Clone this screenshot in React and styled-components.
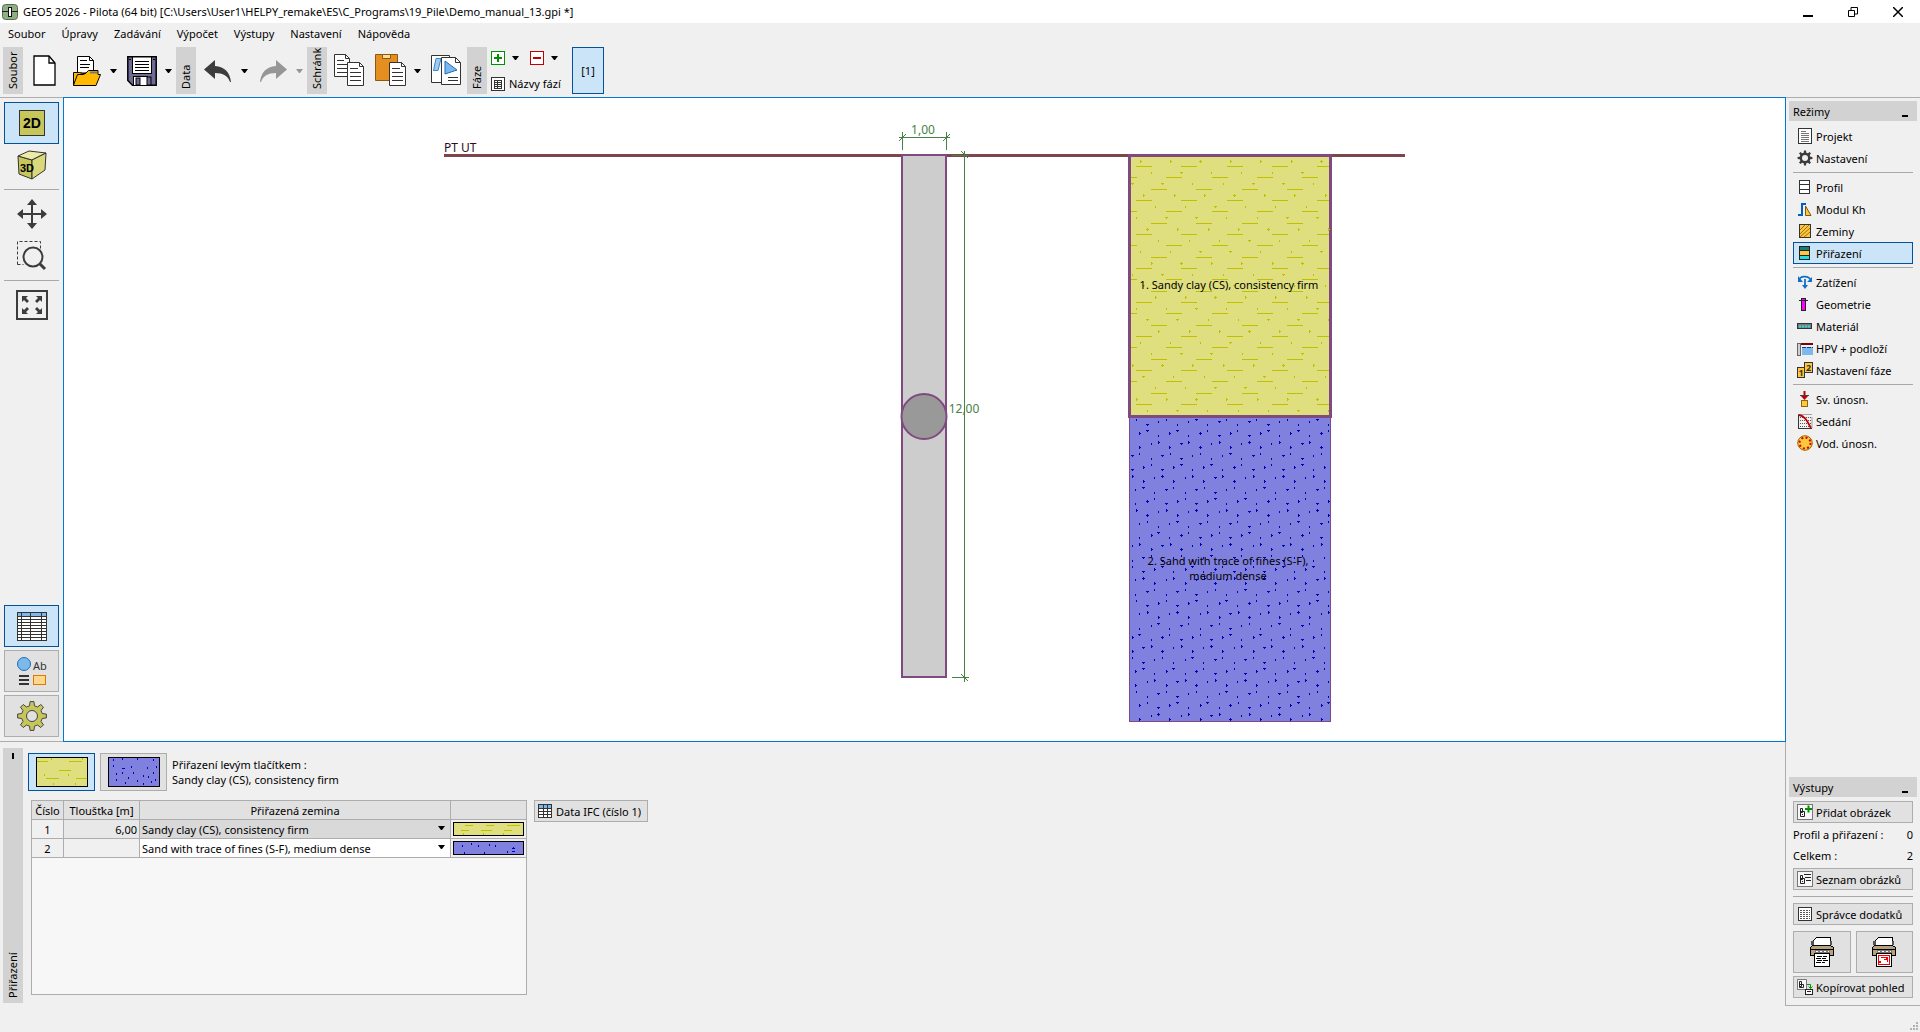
import React from "react";
import styled, { createGlobalStyle, css } from "styled-components";

const ACCENT = "#00539c";
const FRAME = "#0078d4";
const GREY = "#adadad";

const GlobalStyle = createGlobalStyle`
  *, *::before, *::after { box-sizing: border-box; }
  body { margin: 0; background: #f0f0f0; }
  body, button, input, select, table {
    font-family: "Noto Sans", "Open Sans", sans-serif;
    font-size: 11px;
    line-height: 15px;
    color: #000;
  }
  svg { display: block; flex: none; }
`;

/* ---------- page frame ---------- */

const Page = styled.div`
  min-height: 100vh;
  display: flex;
  flex-direction: column;
  background: #f0f0f0;
`;

const TitleBar = styled.header`
  display: flex;
  align-items: center;
  gap: 5px;
  height: 23px;
  padding-left: 2px;
  background: #fff;
`;

const TitleText = styled.h1`
  margin: 0;
  flex: 1;
  font-size: 11px;
  font-weight: 400;
  white-space: nowrap;
`;

const WindowButtons = styled.div`
  display: flex;
`;

const WindowButton = styled.button`
  display: flex;
  align-items: center;
  justify-content: center;
  width: 45px;
  height: 23px;
  padding: 0;
  border: 0;
  background: none;
`;

const MenuBar = styled.nav`
  display: flex;
  height: 20px;
  align-items: center;
`;

const MenuItem = styled.button`
  padding: 0 8px;
  border: 0;
  background: none;
`;

const ToolBar = styled.div`
  display: flex;
  gap: 1px;
  height: 54px;
  padding: 4px 3px 3px;
`;

const ToolGroup = styled.div`
  display: flex;
  align-items: center;
  gap: 2px;
  height: 47px;
`;

const Grip = styled.div`
  display: flex;
  align-items: center;
  justify-content: space-between;
  width: 20px;
  height: 100%;
  padding: 5px 0;
  background: #d2d2d2;
  line-height: 20px;
  writing-mode: vertical-rl;
  transform: rotate(180deg);
  white-space: nowrap;
`;

const Split = styled.div`
  display: flex;
  align-items: center;
  gap: ${(p) => p.$gap || 0}px;
`;

const ToolButton = styled.button`
  display: flex;
  align-items: center;
  justify-content: center;
  width: 40px;
  height: 40px;
  padding: 0;
  border: 0;
  background: none;
`;

const ArrowButton = styled.button`
  display: flex;
  align-items: center;
  justify-content: center;
  width: 13px;
  height: 14px;
  padding: 0;
  border: 0;
  background: none;
`;

const StageTools = styled.div`
  display: flex;
  flex-direction: column;
  justify-content: space-between;
  height: 100%;
  padding: 4px 9px 3px 2px;
`;

const StageRow = styled.div`
  display: flex;
  align-items: center;
  gap: 8px;
`;

const SmallButton = styled.button`
  display: flex;
  align-items: center;
  gap: 4px;
  padding: 0;
  border: 0;
  background: none;
  white-space: nowrap;
`;

const StageTab = styled.button`
  width: 32px;
  height: 47px;
  padding: 0;
  border: 1px solid ${ACCENT};
  background: #cce4f7;
`;

const Body = styled.div`
  flex: 1;
  display: flex;
`;

const Workspace = styled.main`
  flex: 1;
  min-width: 0;
  display: flex;
  flex-direction: column;
`;

const Upper = styled.div`
  position: relative;
  flex: 1;
  display: flex;
  min-height: 0;
  margin-right: -1px;
`;

const Rail = styled.div`
  display: flex;
  flex-direction: column;
  align-items: center;
  width: 63px;
  padding: 4px;
  border-top: 1px solid ${GREY};
  border-bottom: 1px solid ${GREY};
`;

const RailGroup = styled.div`
  display: flex;
  flex-direction: column;
  gap: ${(p) => p.$gap || 0}px;
  width: 100%;
`;

const RailButton = styled.button`
  display: flex;
  align-items: center;
  justify-content: center;
  width: 100%;
  height: 42px;
  padding: 0;
  border: 1px solid transparent;
  background: none;
  ${(p) => p.$raised && css`border-color: ${GREY}; background: #e1e1e1;`}
  ${(p) => p.$active && css`border-color: ${ACCENT}; background: #cce4f7;`}
`;

const Rule = styled.hr`
  width: 100%;
  height: 1px;
  margin: ${(p) => p.$space || 3}px 0;
  border: 0;
  background: #a8a8a8;
`;

const Spacer = styled.div`
  flex: 1;
`;

const Canvas = styled.div`
  flex: 1;
  min-width: 0;
  border: 1px solid ${FRAME};
  background: #fff;
  svg { width: 100%; height: 100%; }
`;

/* ---------- right column ---------- */

const SidePanel = styled.aside`
  display: flex;
  flex-direction: column;
  width: 135px;
  padding: 3px;
  border: solid ${GREY};
  border-width: 1px 0 1px 1px;
`;

const PanelTitle = styled.div`
  display: flex;
  justify-content: space-between;
  align-items: center;
  height: 20px;
  padding: 0 8px 0 4px;
  background: #d2d2d2;
`;

const PanelBody = styled.div`
  display: flex;
  flex-direction: column;
  padding: 4px;
`;

const ModeButton = styled.button`
  display: flex;
  align-items: center;
  gap: 3px;
  height: 22px;
  padding: 0 3px;
  border: 1px solid ${(p) => (p.$active ? ACCENT : "transparent")};
  background: ${(p) => (p.$active ? "#cce4f7" : "none")};
  white-space: nowrap;
`;

const OutputButton = styled(ModeButton)`
  border-color: ${GREY};
  background: #e1e1e1;
`;

const Counters = styled.div`
  padding: 1px 0 2px;
`;

const Counter = styled.div`
  display: flex;
  justify-content: space-between;
  line-height: 21px;
  white-space: nowrap;
`;

const PrintRow = styled.div`
  display: grid;
  grid-template-columns: 1fr 1fr;
  gap: 5px;
  margin: 6px 0 3px;
`;

const PrintButton = styled(RailButton)``;

/* ---------- bottom panel ---------- */

const BottomPanel = styled.section`
  display: flex;
  gap: 5px;
  padding: 6px 3px 3px;
`;

const SideGrip = styled(Grip)`
  height: 255px;
`;

const Assign = styled.div`
  display: flex;
  flex-direction: column;
  gap: 9px;
  padding-top: 5px;
`;

const SoilBar = styled.div`
  display: flex;
  align-items: center;
  gap: 5px;
`;

const SoilButton = styled.button`
  display: flex;
  align-items: center;
  justify-content: center;
  width: 67px;
  height: 38px;
  padding: 0;
  border: 1px solid ${(p) => (p.$active ? ACCENT : GREY)};
  background: ${(p) => (p.$active ? "#cce4f7" : "#e1e1e1")};
`;

const Hint = styled.p`
  margin: 0;
`;

const TableRow = styled.div`
  display: flex;
  align-items: flex-start;
  gap: 7px;
  padding-left: 3px;
`;

const TableFrame = styled.div`
  width: 496px;
  height: 195px;
  border: 1px solid ${GREY};
  background: #f7f7f7;
`;

const Table = styled.table`
  width: 100%;
  table-layout: fixed;
  border-collapse: separate;
  border-spacing: 0;
  th, td {
    height: 19px;
    padding: 0;
    border: solid ${GREY};
    border-width: 0 1px 1px 0;
    font-weight: 400;
    text-align: center;
    white-space: nowrap;
    background: #f0f0f0;
  }
  th { background: #e1e1e1; }
  th:last-child, td:last-child { border-right: 0; }
`;

const Cell = styled.td`
  && { background: ${(p) => p.$bg}; }
`;

const NumberInput = styled.input`
  display: block;
  width: 100%;
  height: 18px;
  padding: 0 2px;
  border: 0;
  background: transparent;
  text-align: right;
`;

const SelectBox = styled.div`
  position: relative;
  svg { position: absolute; right: 5px; top: 6px; pointer-events: none; }
`;

const Select = styled.select`
  display: block;
  width: 100%;
  height: 18px;
  padding: 0 2px;
  border: 0;
  border-radius: 0;
  appearance: none;
  background: transparent;
`;

const Centered = styled.div`
  display: flex;
  justify-content: center;
`;

const DataButton = styled.button`
  display: flex;
  align-items: center;
  gap: 4px;
  height: 22px;
  padding: 0 6px 0 3px;
  border: 1px solid ${GREY};
  background: #e1e1e1;
  white-space: nowrap;
`;

const StatusBar = styled.footer`
  display: flex;
  align-items: flex-end;
  justify-content: flex-end;
  height: 26px;
  padding: 2px;
`;

/* ---------- icons ---------- */

const Icon = ({ w = 16, h = 16, children, ...rest }) => (
  <svg width={w} height={h} viewBox={`0 0 ${w} ${h}`} fill="none" aria-hidden="true" {...rest}>
    {children}
  </svg>
);

const Arrow = ({ color = "#000" }) => (
  <Icon w={7} h={4}><path d="M0 0h7L4 4H3z" fill={color} /></Icon>
);

const AppIcon = () => (
  <Icon>
    <rect x=".5" y=".5" width="15" height="15" rx="3" fill="#8fae84" stroke="#56704d" />
    <path d="M0 7.500h16" stroke="#222" />
    <rect x="6.500" y="3.500" width="3" height="9" fill="#fff" stroke="#111" />
  </Icon>
);

const PageIcon = () => (
  <Icon w={24} h={32}>
    <path d="M1 1h15l6 7v22H1z" fill="#fff" stroke="#000" strokeWidth="1.300" />
    <path d="M16 1v7h6" stroke="#000" strokeWidth="1.300" />
  </Icon>
);

const OpenIcon = () => (
  <Icon w={30} h={32}>
    <path d="M5.500 20V1.500h12l4 4V18h-16z" fill="#fff" stroke="#000" />
    <path d="M17.500 1.500v4h4M8 5.500h7M8 9.500h10M8 12.500h9" stroke="#000" />
    <path d="M1.500 30.500V17.500h6l3 1h3l3-3h9.500v4h2.500L24 30.500z" fill="#ffb900" stroke="#000" />
    <path d="M1.500 30l4-10.500h6l3-2" stroke="#000" />
    <path d="M18 17.500h7" stroke="#777" strokeWidth="2" />
  </Icon>
);

const SaveIcon = () => (
  <Icon w={30} h={30}>
    <path d="M.8.800h28.400v28.400H5.500L.8 24.500z" fill="#6e6c92" stroke="#000" strokeWidth="1.500" />
    <rect x="5.500" y="1" width="19" height="16.500" fill="#fff" stroke="#000" />
    <path d="M8 5.500h14M8 8.500h14M8 11.500h14M8 14.500h14M2 3.500h2M26 3.500h2" stroke="#000" />
    <rect x="6.500" y="20.500" width="14" height="9" fill="#fff" stroke="#000" />
    <rect x="20" y="21" width="4" height="8" fill="#6e6c92" stroke="#000" />
    <rect x="9" y="22" width="4" height="7" fill="#6e6c92" stroke="#000" />
  </Icon>
);

const UndoIcon = ({ color, flip }) => (
  <Icon w={30} h={26}>
    <path
      transform={flip ? "translate(30) scale(-1 1)" : undefined}
      d="M1 11.500L12 2v6c10 .5 15 7 16 16h-1C25 18 20 15 12 15v6z"
      fill={color}
    />
  </Icon>
);

const Sheet = ({ x, y, w = 16, h = 23, lines = 4 }) => (
  <g stroke="#333" transform={`translate(${x} ${y})`}>
    <path d={`M.5.500h${w - 5}l4 4v${h - 5}h-${w - 1}z`} fill="#fff" />
    <path d={`M${w - 4.500}.500v4h4`} />
    {Array.from({ length: lines }, (_, i) => (
      <path key={i} d={`M3 ${6.500 + i * 4}h${i ? w - 6 : w - 9}`} />
    ))}
  </g>
);

const CopyIcon = () => (
  <Icon w={31} h={33}>
    <Sheet x={0} y={0} />
    <Sheet x={13} y={8} w={17} h={24} />
  </Icon>
);

const PasteIcon = () => (
  <Icon w={32} h={33}>
    <path d="M.5.500h22v26H.5z" fill="#e58f20" stroke="#8a5a14" />
    <path d="M7.500.500h8v4h-8z" fill="#ffe08c" stroke="#8a5a14" />
    <Sheet x={14} y={8} w={17} h={24} />
  </Icon>
);

const CopyPictureIcon = () => (
  <Icon w={31} h={31}>
    <path d="M.5.500h18v27H.5z" fill="#fff" stroke="#333" />
    <path d="M5 3.500h5L7 15.500H2.500z" fill="#9fcbf2" stroke="#3a86c8" />
    <path d="M10.500 2.500h14l5 5v22h-19z" fill="#fff" stroke="#333" />
    <path d="M24.500 2.500v5h5" stroke="#333" />
    <path d="M14 6l12 9-12 4z" fill="#7cb8ec" stroke="#1c6fb8" />
    <path d="M17 22.500h10M17 25.500h10" stroke="#333" />
  </Icon>
);

const PlusIcon = ({ minus }) => (
  <Icon w={14} h={14}>
    <rect x=".5" y=".5" width="13" height="13" fill="#fff" stroke={minus ? "#c00000" : "#009000"} />
    <path d={minus ? "M3 7h8" : "M3 7h8M7 3v8"} stroke={minus ? "#c00000" : "#009000"} strokeWidth="2" />
  </Icon>
);

const GridIcon = () => (
  <Icon w={14} h={14} shapeRendering="crispEdges">
    <rect x=".5" y=".5" width="13" height="13" fill="#fff" stroke="#333" />
    <rect x="1" y="1" width="12" height="3" fill="#7cb8ec" />
    <path d="M1 4.500h12M1 7.500h12M1 10.500h12M5 1v12M9 1v12" stroke="#333" />
  </Icon>
);

const StageListIcon = () => (
  <Icon w={14} h={14} shapeRendering="crispEdges">
    <rect x=".5" y=".5" width="13" height="13" fill="#fff" stroke="#333" />
    <path d="M3 3.500h8M3 5.500h8M3 7.500h8M3 9.500h8M3 11.500h8M3.500 3v8M6.500 3v8M10.500 3v8" stroke="#333" />
  </Icon>
);

const View2D = () => (
  <Icon w={26} h={26}>
    <rect x=".5" y=".5" width="25" height="25" fill="#c6c65a" stroke="#333" />
    <text x="13" y="18" textAnchor="middle" fontFamily="Liberation Sans, sans-serif" fontWeight="700" fontSize="14" fill="#000">2D</text>
  </Icon>
);

const View3D = () => (
  <Icon w={30} h={30}>
    <g stroke="#333" strokeLinejoin="round">
      <path d="M1 6l14 4v19L2 24z" fill="#c6c65a" />
      <path d="M1 6L12 1l17 2-14 7z" fill="#ececa8" />
      <path d="M15 10l14-7-1 17-13 9z" fill="#d9d97c" />
    </g>
    <text x="10" y="22" textAnchor="middle" fontFamily="Liberation Sans, sans-serif" fontWeight="700" fontSize="11" fill="#000">3D</text>
  </Icon>
);

const MoveIcon = () => (
  <Icon w={30} h={30}>
    <path d="M15 4v22M4 15h22" stroke="#3c3c3c" strokeWidth="2" />
    <path d="M15 0l5 6H10zM15 30l5-6H10zM0 15l6-5v10zM30 15l-6-5v10z" fill="#3c3c3c" />
  </Icon>
);

const ZoomIcon = () => (
  <Icon w={30} h={30}>
    <path d="M.5 23.500V.500h23v8M.5 23.500h6" stroke="#3c3c3c" strokeDasharray="3 2" />
    <circle cx="16" cy="16" r="9.500" stroke="#3c3c3c" strokeWidth="2" fill="#f0f0f0" />
    <path d="M23 23l5 5" stroke="#3c3c3c" strokeWidth="3" />
  </Icon>
);

const FitIcon = () => (
  <Icon w={32} h={30}>
    <rect x="1" y="1" width="30" height="28" stroke="#3c3c3c" strokeWidth="2" />
    <path d="M6 6h6l-2 2 3 3-2 2-3-3-2 2zM26 6h-6l2 2-3 3 2 2 3-3 2 2zM6 24h6l-2-2 3-3-2-2-3 3-2-2zM26 24h-6l2-2-3-3 2-2 3 3 2-2z" fill="#3c3c3c" />
  </Icon>
);

const TableIcon = () => (
  <Icon w={30} h={29} shapeRendering="crispEdges">
    <rect x=".5" y=".5" width="29" height="28" fill="#fff" stroke="#333" />
    <rect x="1" y="1" width="28" height="3" fill="#7cb8ec" />
    <path d="M1 4.500h28M1 7.500h28M1 10.500h28M1 13.500h28M1 16.500h28M1 19.500h28M1 22.500h28M1 25.500h28M4.500 1v27M13.500 1v27M24.500 1v27" stroke="#333" />
  </Icon>
);

const StyleIcon = () => (
  <Icon w={30} h={29}>
    <circle cx="7" cy="7" r="6.500" fill="#7cb8ec" stroke="#1c6fb8" />
    <text x="23" y="13" textAnchor="middle" fontSize="11" fill="#333">Ab</text>
    <path d="M2 19h10M2 23h10M2 27h10" stroke="#333" strokeWidth="2" />
    <rect x="16.500" y="18.500" width="12" height="9" fill="#fbd88c" stroke="#e07800" />
  </Icon>
);

const gearPath = (cx, cy, r1, r2, n) => {
  const pts = [];
  for (let i = 0; i < n; i++) {
    [[-0.3, r1], [-0.17, r2], [0.17, r2], [0.3, r1]].forEach(([o, r]) => {
      const a = ((i + o) * 2 * Math.PI) / n - Math.PI / 2;
      pts.push(`${(cx + r * Math.cos(a)).toFixed(1)} ${(cy + r * Math.sin(a)).toFixed(1)}`);
    });
  }
  return `M${pts.join("L")}z`;
};

const GearIcon = () => (
  <Icon w={30} h={30}>
    <path d={gearPath(15, 15, 10.500, 14.500, 8)} fill="#c6c65a" stroke="#444" strokeLinejoin="round" />
    <circle cx="15" cy="15" r="5.500" fill="#e1e1e1" stroke="#444" />
  </Icon>
);

const modeIcons = {
  projekt: (
    <>
      <rect x="1.500" y=".5" width="13" height="15" fill="#fff" stroke="#333" />
      <path d="M4 3.500h5M4 5.500h8M4 7.500h8M4 9.500h8M4 11.500h8M4 13.500h8" stroke="#777" />
    </>
  ),
  nastaveni: (
    <>
      <path d={gearPath(8, 8, 5.500, 7.500, 8)} fill="#3c3c3c" />
      <circle cx="8" cy="8" r="3" fill="#f0f0f0" />
    </>
  ),
  profil: (
    <>
      <rect x="2.500" y="1.500" width="10" height="13" fill="#fff" stroke="#333" />
      <path d="M3 5.500h9M3 10.500h9" stroke="#333" />
    </>
  ),
  modul: (
    <>
      <path d="M1 14h4V3h4" stroke="#0060c0" strokeWidth="2" />
      <path d="M8.500 5v9.500h5.500z" fill="#ffc83c" stroke="#7a5a10" />
    </>
  ),
  zeminy: (
    <>
      <rect x="2.500" y="1.500" width="11" height="13" fill="#ffc83c" stroke="#333" />
      <path d="M3 7l5-5M3 11l9-9M3 14l10-9M7 14l6-5" stroke="#a06a10" />
    </>
  ),
  prirazeni: (
    <>
      <rect x="2.500" y="1.500" width="10" height="13" fill="#ffc83c" stroke="#222" />
      <path d="M3 2h9v3H3z" fill="#108080" />
      <path d="M3 11h9v3H3z" fill="#20e0e0" />
      <path d="M3 5.500h9M3 10.500h9" stroke="#222" />
    </>
  ),
  zatizeni: (
    <>
      <path d="M8 13V5M2 6c1-4 9-5 12 0" stroke="#1070c8" strokeWidth="1.800" />
      <path d="M1 2v6h5zM15 3v5h-5zM5 11h6l-3 4z" fill="#1070c8" />
    </>
  ),
  geometrie: (
    <>
      <rect x="4.500" y="2.500" width="4" height="12" fill="#ff00ff" stroke="#222" />
      <path d="M2 4.500h9" stroke="#222" />
    </>
  ),
  material: (
    <>
      <rect x=".5" y="5.500" width="14" height="5" fill="#7a7a7a" stroke="#333" />
      <path d="M2 8.500h12" stroke="#20e0e0" strokeWidth="2" strokeDasharray="2 1" />
    </>
  ),
  hpv: (
    <>
      <path d="M5 7h11v8H5z" fill="#7cb8ec" />
      <path d="M4 4h12" stroke="#800000" strokeWidth="2" />
      <path d="M5 7.500h11" stroke="#0040a0" strokeDasharray="4 1" />
      <rect x=".5" y="3.500" width="3" height="12" fill="#d0d0d0" stroke="#666" />
    </>
  ),
  faze: (
    <>
      <rect x="7.500" y=".5" width="8" height="10" fill="#ffc83c" stroke="#333" />
      <text x="11.500" y="9" textAnchor="middle" fontSize="9" fontWeight="700" fill="#333">2</text>
      <rect x=".5" y="5.500" width="7" height="10" fill="#ffc83c" stroke="#333" />
      <text x="4" y="14" textAnchor="middle" fontSize="9" fontWeight="700" fill="#333">1</text>
    </>
  ),
  svunosn: (
    <>
      <rect x="4.500" y="9.500" width="6" height="6" fill="#ffc83c" stroke="#8a6a10" />
      <path d="M7.500 0v5" stroke="#c00000" strokeWidth="2" />
      <path d="M3 4h9L7.500 9z" fill="#c00000" />
      <path d="M3 4.500h9" stroke="#444" />
    </>
  ),
  sedani: (
    <>
      <path d="M1.500 1.500H15M15 4.500v10.500M3 4.500h12M3 7.500h12M3 10.500h12M3 13.500h12" stroke="#555" strokeDasharray="1 1" />
      <path d="M1.500 15.500V1.500M1 15.500h14" stroke="#333" />
      <path d="M2 2c6 1 8 6 12 13" stroke="#c00000" strokeWidth="1.800" />
    </>
  ),
  vodunosn: (
    <>
      <circle cx="8" cy="8" r="7.300" fill="#ffc83c" stroke="#9a6a00" />
      <circle cx="8" cy="8" r="5.500" stroke="#d00000" strokeWidth="2" strokeDasharray="2 2.300" />
    </>
  ),
};

const PictureIcon = ({ kind }) => (
  <Icon>
    {kind === "view" ? (
      <>
        <path d="M.5.500h9v10h-9z" fill="#f7f7f7" stroke="#777" />
        <path d="M2.500 2.500h2v5h-2zM2.500 5.500h4v3h-4z" stroke="#222" />
        <path d="M10 5.500h3.500V9M11.500 7.500l2 2 2-2" stroke="#009000" />
        <rect x="8.500" y="10.500" width="7" height="5" fill="#fff" stroke="#222" />
        <path d="M10 12.500h4" stroke="#222" />
      </>
    ) : (
      <>
        <rect x=".5" y=".5" width="15" height="15" fill="#f7f7f7" stroke="#777" />
        <path d="M3.500 4.500h2v4h-2zM3.500 7.500h4v5h-4zM5 10.500h1" stroke="#222" />
        {kind === "add" && <path d="M8 5h7M11.500 1.500v7" stroke="#009000" strokeWidth="2" />}
        {kind === "list" && <path d="M7 3.500h7M8 6.500h6M9 9.500h5" stroke="#222" />}
      </>
    )}
  </Icon>
);

const AddonIcon = () => (
  <Icon>
    <rect x="1.500" y="1.500" width="13" height="13" fill="#fff" stroke="#333" />
    <path d="M3 4.500h10M3 6.500h10M3 8.500h10M3 10.500h10M3 12.500h10" stroke="#555" strokeDasharray="2 1" />
  </Icon>
);

const PrinterIcon = ({ picture }) => (
  <Icon w={26} h={30} shapeRendering="crispEdges">
    <path d="M4.500 9.500V3.500l3-3h14v9z" fill="#fff" stroke="#000" />
    <path d="M2 4h3v4H2zM21 4h2v4h-2z" fill="#555" />
    <path d="M3.500 8.500h18l3 2v8h-23v-8z" fill="#b8a27c" stroke="#000" />
    <path d="M6 12h15v5H6z" fill="#777" />
    <path d="M2 12.500h22" stroke="#000" />
    <path d="M7 14.500h13" stroke="#fff" strokeDasharray="2 2" />
    <path d="M5.500 16.500h15v13h-15z" fill="#fff" stroke="#000" />
    {picture ? (
      <>
        <path d="M7.500 18.500h11v9h-11z" stroke="#f00000" />
        <path d="M9 19.500h8v6zM8 24h2v2H8z" fill="#f00000" />
        <path d="M10 21.500h5M12 23.500h4" stroke="#fff" />
      </>
    ) : (
      <path d="M8 19.500h10M7 21.500h10M8 23.500h11M7 25.500h9" stroke="#000" strokeDasharray="5 1" />
    )}
  </Icon>
);

/* ---------- soil hatching ---------- */

const STEP = 34 / 3;
const PITCH = 272 / 9;

const near = (a, b) => Math.abs(a - b) < 14 || Math.abs(a - b) > 349;

function mark(x, y, row, anchor, key) {
  const px = Math.floor(x);
  const py = Math.round(y);
  const phase = row % 3;
  const rel = (((Math.round((x - 1120) * 3) - anchor - 34 * row) % 363) + 363) % 363;
  if (phase === 0) {
    return near(rel, 0)
      ? <path key={key} d={`M${px} ${py - 1}h1v1h1v1h-1v1h-1v-1h-1v-1h1z`} />
      : <path key={key} d={`M${px} ${py - 1}h1v1h1v1h-1v1h-1z`} />;
  }
  const wedge = phase === 1 ? near(rel, 272) : near(rel, 181) || near(rel, 91);
  return wedge
    ? <path key={key} d={`M${px - 1} ${py - 1}h3v1h-1v1h-1v-1h-1z`} />
    : <path key={key} d={`M${px} ${py - 1}h1v2h-1z`} />;
}

function dots(x0, y0, rowStart, anchor, top, bottom) {
  const out = [];
  for (let row = 0; row < 30; row++) {
    const y = y0 + row * STEP;
    if (y < top || y > bottom) continue;
    const start = (x0 + row * STEP - 1131) % PITCH;
    for (let x = 1131 + start; x < 1330; x += PITCH) {
      out.push(mark(x, y, row + rowStart, anchor, `${row}-${x.toFixed(0)}`));
    }
  }
  return out;
}

function dashes() {
  const out = [];
  const offsets = [15, 0, 30];
  for (let row = 0; row < 23; row++) {
    const y = Math.round(166 + row * STEP);
    if (y > 414) break;
    for (let i = 0; i < 6; i++) {
      const x = 1121 + offsets[row % 3] + Math.round(i * 45.300);
      const from = Math.max(x, 1131);
      const to = Math.min(x + 16, 1329);
      if (to > from) out.push(<path key={`${row}-${i}`} d={`M${from} ${y}h${to - from}v1h-${to - from}z`} />);
    }
  }
  return out;
}

const Drawing = () => (
  <svg viewBox="64 98 1721 643" role="img" aria-label="Pilota a profil zemin" fontSize="11">
    <path d="M444 155.500H1405" stroke="#7e464c" strokeWidth="3" />
    <text x="444" y="152" fill="#2c0c20" fontSize="12">PT UT</text>

    <rect x="902" y="155" width="44" height="522" fill="#cdcdcd" stroke="#7e4a80" strokeWidth="2" />
    <circle cx="924" cy="416.500" r="22.500" fill="#999" stroke="#7e4a80" strokeWidth="2" />

    <g stroke="#468246" shapeRendering="crispEdges">
      <path d="M902.500 132v18M946.500 132v18M899 137.500h51M964.500 151v531M952 155.500h17M952 677.500h17" />
    </g>
    <path d="M899 141l7-7M943 141l7-7M961 151l7 7M961 674l7 7" stroke="#468246" />
    <g fill="#468246" textAnchor="middle" fontSize="12">
      <text x="923" y="134">1,00</text>
      <text x="964" y="413">12,00</text>
    </g>

    <rect x="1129.500" y="417.500" width="201" height="304" fill="#8080df" stroke="#7e4a80" />
    <g fill="#0000b4" shapeRendering="crispEdges">
      <g>{dots(1158.600, 421.700, 23, 151, 419, 720)}</g>
      <g>{dots(1147.300, 424.700, 1, 139, 419, 720)}</g>
      <g>{dots(1136, 419.700, 1, 286, 419, 720)}</g>
    </g>

    <rect x="1129.500" y="155.500" width="201" height="261" fill="#dfdf80" stroke="#7e4a80" strokeWidth="3" />
    <g fill="#c0c000" shapeRendering="crispEdges">
      <g>{dashes()}</g>
      <g>{dots(1140, 161.300, 0, 241, 158, 413)}</g>
    </g>

    <g textAnchor="middle" fill="#000">
      <text x="1229" y="289">1. Sandy clay (CS), consistency firm</text>
      <text x="1228" y="565">2. Sand with trace of fines (S-F),</text>
      <text x="1228" y="580">medium dense</text>
    </g>
  </svg>
);

const swatchMarks = {
  clay: {
    big: "M1 4.500h11M33 4.500h13M23 13.500h12M10 21.500h13M40 21.500h11M15.500 1v2M46.500 1v2M8.500 17v2M32.500 17v2M17.500 26v2M39.500 26v2",
    small: "M12 3.500h8M33 3.500h8M54 3.500h13M8 8.500h8M28 8.500h11M51 8.500h8M10.500 11v2M30.500 11v2M50.500 11v2",
  },
  sand: {
    big: "M14.500 1v2M29.500 1v2M45.500 2v2M5.500 2v2M5.500 8v2M23.500 9v2M39.500 10v2M48.500 9v2M14 11.500h3M8.500 16v2M14.500 15v2M25.500 15v2M45.500 15v2M35.500 18v2M40.500 19v2M20.500 20v2M8.500 22v2M29.500 23v2M47.500 22v2M17.500 25v2M35.500 26v2M43.500 24v2",
    small: "M9.500 4v2M25.500 4v2M42.500 4v2M60.500 6v2M59 7.500h3M59 10.500h3M11.500 11v2M31.500 11v2M54.500 10v2M18.500 2v2M36.500 3v2",
  },
};

const Swatch = ({ soil, small }) => {
  const w = small ? 71 : 52;
  const h = small ? 14 : 30;
  return (
    <Icon w={w} h={h} shapeRendering="crispEdges">
      <rect x=".5" y=".5" width={w - 1} height={h - 1} fill={soil === "clay" ? "#dfdf80" : "#8080df"} stroke="#000" />
      <path d={swatchMarks[soil][small ? "small" : "big"]} stroke={soil === "clay" ? "#c0c000" : "#0000c0"} />
    </Icon>
  );
};

/* ---------- data ---------- */

const menu = ["Soubor", "Úpravy", "Zadávání", "Výpočet", "Výstupy", "Nastavení", "Nápověda"];

const modes = [
  [["projekt", "Projekt"], ["nastaveni", "Nastavení"]],
  [["profil", "Profil"], ["modul", "Modul Kh"], ["zeminy", "Zeminy"], ["prirazeni", "Přiřazení"]],
  [["zatizeni", "Zatížení"], ["geometrie", "Geometrie"], ["material", "Materiál"], ["hpv", "HPV + podloží"], ["faze", "Nastavení fáze"]],
  [["svunosn", "Sv. únosn."], ["sedani", "Sedání"], ["vodunosn", "Vod. únosn."]],
];

const soils = { clay: "Sandy clay (CS), consistency firm", sand: "Sand with trace of fines (S-F), medium dense" };

const layers = [
  { id: 1, thickness: "6,00", soil: "clay", bg: "#d9d9d9", numBg: "#e8e8e8" },
  { id: 2, thickness: "", soil: "sand", bg: "#ffffff", numBg: "#f0f0f0" },
];

const Minimize = () => <Icon w={7} h={12}><path d="M0 10h6v2H0z" fill="#000" /></Icon>;

const Dropdown = ({ label, color }) => (
  <ArrowButton aria-label={label}><Arrow color={color} /></ArrowButton>
);

export default function App() {
  return (
    <Page>
      <GlobalStyle />
      <TitleBar>
        <AppIcon />
        <TitleText>GEO5 2026 - Pilota (64 bit) [C:\Users\User1\HELPY_remake\ES\C_Programs\19_Pile\Demo_manual_13.gpi *]</TitleText>
        <WindowButtons>
          <WindowButton aria-label="Minimalizovat"><Icon w={10} h={10}><path d="M0 8h10v2H0z" fill="#000" /></Icon></WindowButton>
          <WindowButton aria-label="Obnovit">
            <Icon w={10} h={10}><path d="M.5 3.500h6v6h-6zM3 3V.500h6.500V7H7" stroke="#000" /></Icon>
          </WindowButton>
          <WindowButton aria-label="Zavřít"><Icon w={10} h={10}><path d="M0 0l10 10M10 0L0 10" stroke="#000" strokeWidth="1.500" /></Icon></WindowButton>
        </WindowButtons>
      </TitleBar>
      <MenuBar>
        {menu.map((m) => <MenuItem key={m}>{m}</MenuItem>)}
      </MenuBar>
      <ToolBar>
        <ToolGroup>
          <Grip>Soubor</Grip>
          <ToolButton aria-label="Nový"><PageIcon /></ToolButton>
          <Split><ToolButton aria-label="Otevřít"><OpenIcon /></ToolButton><Dropdown label="Naposledy otevřené" /></Split>
          <Split><ToolButton aria-label="Uložit"><SaveIcon /></ToolButton><Dropdown label="Uložit jako" /></Split>
        </ToolGroup>
        <ToolGroup>
          <Grip>Data</Grip>
          <Split><ToolButton aria-label="Zpět"><UndoIcon color="#3c3c3c" /></ToolButton><Dropdown label="Historie zpět" /></Split>
          <Split><ToolButton aria-label="Znovu"><UndoIcon color="#969696" flip /></ToolButton><Dropdown label="Historie vpřed" color="#969696" /></Split>
        </ToolGroup>
        <ToolGroup>
          <Grip>Schránk</Grip>
          <ToolButton aria-label="Kopírovat"><CopyIcon /></ToolButton>
          <Split><ToolButton aria-label="Vložit"><PasteIcon /></ToolButton><Dropdown label="Možnosti vložení" /></Split>
          <ToolButton aria-label="Kopírovat obrázek"><CopyPictureIcon /></ToolButton>
        </ToolGroup>
        <ToolGroup>
          <Grip>Fáze</Grip>
          <StageTools>
            <StageRow>
              <Split $gap={4}>
                <SmallButton aria-label="Přidat fázi"><PlusIcon /></SmallButton>
                <Dropdown label="Možnosti přidání" />
              </Split>
              <Split $gap={4}>
                <SmallButton aria-label="Odebrat fázi"><PlusIcon minus /></SmallButton>
                <Dropdown label="Možnosti odebrání" />
              </Split>
            </StageRow>
            <SmallButton><StageListIcon />Názvy fází</SmallButton>
          </StageTools>
          <StageTab>[1]</StageTab>
        </ToolGroup>
      </ToolBar>

      <Body>
        <Workspace>
          <Upper>
            <Rail>
              <RailGroup>
                <RailButton $active aria-label="2D"><View2D /></RailButton>
                <RailButton aria-label="3D"><View3D /></RailButton>
              </RailGroup>
              <Rule />
              <RailGroup>
                <RailButton aria-label="Posun"><MoveIcon /></RailButton>
                <RailButton aria-label="Lupa"><ZoomIcon /></RailButton>
              </RailGroup>
              <Rule />
              <RailButton aria-label="Zobrazit vše"><FitIcon /></RailButton>
              <Spacer />
              <RailGroup $gap={3}>
                <RailButton $active aria-label="Tabulka"><TableIcon /></RailButton>
                <RailButton $raised aria-label="Styl kreslení"><StyleIcon /></RailButton>
                <RailButton $raised aria-label="Nastavení kreslení"><GearIcon /></RailButton>
              </RailGroup>
            </Rail>
            <Canvas><Drawing /></Canvas>
          </Upper>
          <BottomPanel>
            <SideGrip>
              <span>Přiřazení</span>
              <Icon w={2} h={6}><path d="M0 0h2v6H0z" fill="#000" /></Icon>
            </SideGrip>
            <Assign>
              <SoilBar>
                <SoilButton $active aria-label={soils.clay}><Swatch soil="clay" /></SoilButton>
                <SoilButton aria-label={soils.sand}><Swatch soil="sand" /></SoilButton>
                <Hint>Přiřazení levým tlačítkem :<br />Sandy clay (CS), consistency firm</Hint>
              </SoilBar>
              <TableRow>
                <TableFrame>
                  <Table>
                    <colgroup>
                      <col width="32" /><col width="76" /><col /><col width="75" />
                    </colgroup>
                    <thead>
                      <tr><th>Číslo</th><th>Tloušťka [m]</th><th>Přiřazená zemina</th><th /></tr>
                    </thead>
                    <tbody>
                      {layers.map((l) => (
                        <tr key={l.id}>
                          <td>{l.id}</td>
                          <Cell $bg={l.numBg}>
                            <NumberInput aria-label={`Tloušťka ${l.id}`} defaultValue={l.thickness} />
                          </Cell>
                          <Cell $bg={l.bg}>
                            <SelectBox>
                              <Select aria-label={`Zemina ${l.id}`} defaultValue={l.soil}>
                                {Object.entries(soils).map(([k, v]) => <option key={k} value={k}>{v}</option>)}
                              </Select>
                              <Arrow />
                            </SelectBox>
                          </Cell>
                          <td><Centered><Swatch soil={l.soil} small /></Centered></td>
                        </tr>
                      ))}
                    </tbody>
                  </Table>
                </TableFrame>
                <DataButton><GridIcon />Data IFC (číslo 1)</DataButton>
              </TableRow>
            </Assign>
          </BottomPanel>
        </Workspace>

        <SidePanel>
          <PanelTitle>Režimy<Minimize /></PanelTitle>
          <PanelBody>
            {modes.map((group, i) => (
              <React.Fragment key={group[0][0]}>
                {i > 0 && <Rule />}
                {group.map(([id, label]) => (
                  <ModeButton key={id} $active={id === "prirazeni"}>
                    <Icon>{modeIcons[id]}</Icon>{label}
                  </ModeButton>
                ))}
              </React.Fragment>
            ))}
          </PanelBody>
          <Spacer />
          <PanelTitle>Výstupy<Minimize /></PanelTitle>
          <PanelBody>
            <OutputButton><PictureIcon kind="add" />Přidat obrázek</OutputButton>
            <Counters>
              <Counter><span>Profil a přiřazení :</span><span>0</span></Counter>
              <Counter><span>Celkem :</span><span>2</span></Counter>
            </Counters>
            <OutputButton><PictureIcon kind="list" />Seznam obrázků</OutputButton>
            <Rule $space={6} />
            <OutputButton><AddonIcon />Správce dodatků</OutputButton>
            <PrintRow>
              <PrintButton $raised aria-label="Tisk protokolu"><PrinterIcon /></PrintButton>
              <PrintButton $raised aria-label="Tisk obrázku"><PrinterIcon picture /></PrintButton>
            </PrintRow>
            <OutputButton><PictureIcon kind="view" />Kopírovat pohled</OutputButton>
          </PanelBody>
        </SidePanel>
      </Body>
      <StatusBar>
        <Icon w={8} h={8} shapeRendering="crispEdges">
          <path d="M6 0h2v2H6zM3 3h2v2H3zM6 3h2v2H6zM0 6h2v2H0zM3 6h2v2H3zM6 6h2v2H6z" fill="#b0b0b0" />
        </Icon>
      </StatusBar>
    </Page>
  );
}
